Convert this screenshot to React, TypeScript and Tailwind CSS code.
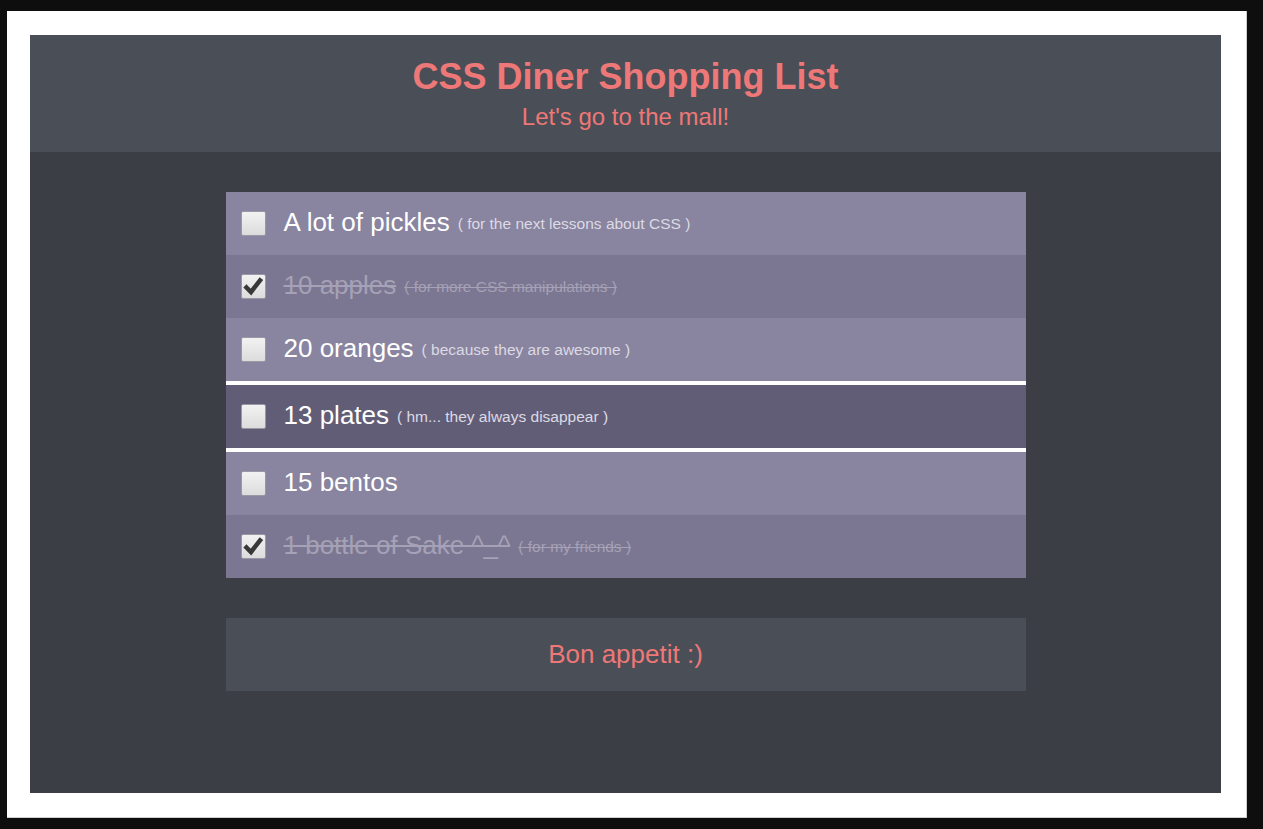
import React from "react";

type Item = { main: string; note?: string; done?: boolean; hot?: boolean };

const items: Item[] = [
  { main: "A lot of pickles", note: "( for the next lessons about CSS )" },
  { main: "10 apples", note: "( for more CSS manipulations )", done: true },
  { main: "20 oranges", note: "( because they are awesome )" },
  { main: "13 plates", note: "( hm... they always disappear )", hot: true },
  { main: "15 bentos" },
  { main: "1 bottle of Sake ^_^", note: "( for my friends )", done: true },
];

function Box({ checked }: { checked?: boolean }) {
  return (
    <div className="w-[25px] h-[25px] shrink-0 rounded-[2px] border border-[#9a98a4] bg-gradient-to-b from-[#f2f2f2] to-[#dcdcdc] flex items-center justify-center">
      {checked && (
        <svg width="21" height="21" viewBox="0 0 21 21">
          <path d="M3.5 11.5 L8 16 L17 4.5" fill="none" stroke="#383838" strokeWidth="4.5" strokeLinecap="square" strokeLinejoin="miter" />
        </svg>
      )}
    </div>
  );
}

export default function App() {
  return (
    <div className="min-h-[829px] w-full bg-[#0e0e0e] pt-[11px] pl-[7px]" style={{ fontFamily: '"Liberation Sans", Arial, sans-serif' }}>
      <div className="w-[1240px] h-[807px] bg-white pt-[24px] pl-[23px] border-r border-b border-[#cfcfcf]">
        <div className="w-[1191px] h-[758px] bg-[#3c3e46] flex flex-col">
          <header className="h-[117px] bg-[#4a4e56] flex flex-col items-center pt-[21px] text-[#ee7878]">
            <h1 className="text-[36px] font-bold leading-[41px]">CSS Diner Shopping List</h1>
            <p className="text-[24px] leading-[28px] mt-[6px]">Let's go to the mall!</p>
          </header>
          <div className="flex flex-col items-center pt-[40px]">
            <ul className="w-[800px] flex flex-col">
              {items.map((it, i) => {
                const bg = it.hot ? "bg-[#625d77] border-y-4 border-white h-[71px]" : i % 2 === 0 ? "bg-[#89849f] h-[63px]" : "bg-[#7b7691] h-[63px]";
                return (
                  <li key={i} className={`flex items-center pl-[15px] ${bg}`}>
                    <Box checked={it.done} />
                    <div className="ml-[18px] whitespace-pre leading-[30px]">
                      <span className={`text-[26px] ${it.done ? "text-[#a5a1b6] line-through" : "text-white"}`}>{it.main}</span>
                      {it.note && (
                        <span className={`text-[15.5px] ml-[8px] align-[2px] ${it.done ? "text-[#a5a1b6] line-through" : "text-[#dcdae4]"}`}>{it.note}</span>
                      )}
                    </div>
                  </li>
                );
              })}
            </ul>
            <div className="mt-[40px] w-[800px] h-[73px] bg-[#4a4e56] flex items-center justify-center">
              <span className="text-[26px] text-[#ee7878]">Bon appetit :)</span>
            </div>
          </div>
        </div>
      </div>
    </div>
  );
}
